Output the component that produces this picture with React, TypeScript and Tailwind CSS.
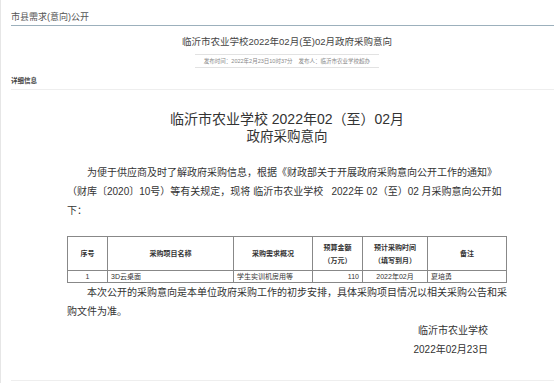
import React from 'react';

const columns = [
    { key: 'no', label: ['序号'], width: 'w-[40px]' },
    { key: 'name', label: ['采购项目名称'], width: 'w-[126px]' },
    { key: 'desc', label: ['采购需求概况'], width: 'w-[79px]' },
    { key: 'budget', label: ['预算金额', '（万元）'], width: 'w-[50px]' },
    { key: 'time', label: ['预计采购时间', '（填写到月）'], width: 'w-[65px]' },
    { key: 'note', label: ['备注'], width: 'w-[79px]' },
];

const rows = [
    { no: '1', name: '3D云桌面', desc: '学生实训机房用等', budget: '110', time: '2022年02月', note: '夏培勇' },
];

export default function App() {
    return (
        <div className="w-[554px] h-[383px] overflow-hidden bg-white border-l border-[#e6e6e6] font-['Liberation_Sans','Noto_Sans_CJK_SC',sans-serif]">
            <div className="pl-[10px]">
                <div className="w-[552px]">
                    {/* Breadcrumb header */}
                    <div className="pt-[11px] pb-[2px] text-[9px] leading-[12px] text-[#555] border-b border-[#9cb0bc]">
                        市县需求(意向)公开
                    </div>

                    {/* Article title + meta */}
                    <div className="mt-[9px] text-center text-[9.5px] leading-[14px] text-[#444]">
                        临沂市农业学校2022年02月(至)02月政府采购意向
                    </div>
                    <div className="mt-[5px] mx-auto w-[184px] border-y border-[#e2e2e2] text-center text-[5.5px] leading-[12px] text-[#888]">
                        发布时间：2022年2月23日10时37分&nbsp;&nbsp;&nbsp;&nbsp;发布人：临沂市农业学校超办
                    </div>

                    <div className="mt-[8px] pb-[3px] border-b border-[#eeeeee] text-[6.5px] leading-[10px] font-bold text-[#444]">
                        详细信息
                    </div>

                    {/* Body */}
                    <div className="mx-[56px] text-[#333]">
                        <div className="mt-[20px] text-center text-[14px] leading-[18px] text-[#333]">
                            <div>临沂市农业学校 2022年02（至）02月</div>
                            <div className="text-[13.5px]">政府采购意向</div>
                        </div>

                        <p className="mt-[17px] mr-[-2px] text-[10px] leading-[19px] indent-[20px]">
                            为便于供应商及时了解政府采购信息，根据《财政部关于开展政府采购意向公开工作的通知》（财库〔2020〕10号）等有关规定，现将 临沂市农业学校&nbsp;&nbsp; 2022年 02（至）02 月采购意向公开如下：
                        </p>

                        <table className="mt-[16px] w-[440px] table-fixed border-collapse border border-[#777] text-[7px] text-[#333]">
                            <colgroup>
                                {columns.map(c => (
                                    <col key={c.key} className={c.width} />
                                ))}
                            </colgroup>
                            <thead>
                                <tr className="h-[34px]">
                                    {columns.map(c => (
                                        <th key={c.key} className="border border-[#888] font-bold leading-[13px] text-center align-middle">
                                            {c.label.map(l => (
                                                <div key={l}>{l}</div>
                                            ))}
                                        </th>
                                    ))}
                                </tr>
                            </thead>
                            <tbody>
                                {rows.map(r => (
                                    <tr key={r.no} className="h-[12px] leading-[10px]">
                                        <td className="border border-[#888] text-center">{r.no}</td>
                                        <td className="border border-[#888] pl-[3px]">{r.name}</td>
                                        <td className="border border-[#888] pl-[3px]">{r.desc}</td>
                                        <td className="border border-[#888] text-right pr-[3px]">{r.budget}</td>
                                        <td className="border border-[#888] text-center">{r.time}</td>
                                        <td className="border border-[#888] pl-[3px]">{r.note}</td>
                                    </tr>
                                ))}
                            </tbody>
                        </table>

                        <p className="mr-[-2px] text-[10px] leading-[19px] indent-[20px]">
                            本次公开的采购意向是本单位政府采购工作的初步安排，具体采购项目情况以相关采购公告和采购文件为准。
                        </p>

                        <div className="pr-[19px] text-right text-[10px] leading-[19px]">
                            <div>临沂市农业学校</div>
                            <div>2022年02月23日</div>
                        </div>
                    </div>

                    <div className="mt-[21px] border-b border-[#eeeeee]" />
                </div>
            </div>
        </div>
    );
}
